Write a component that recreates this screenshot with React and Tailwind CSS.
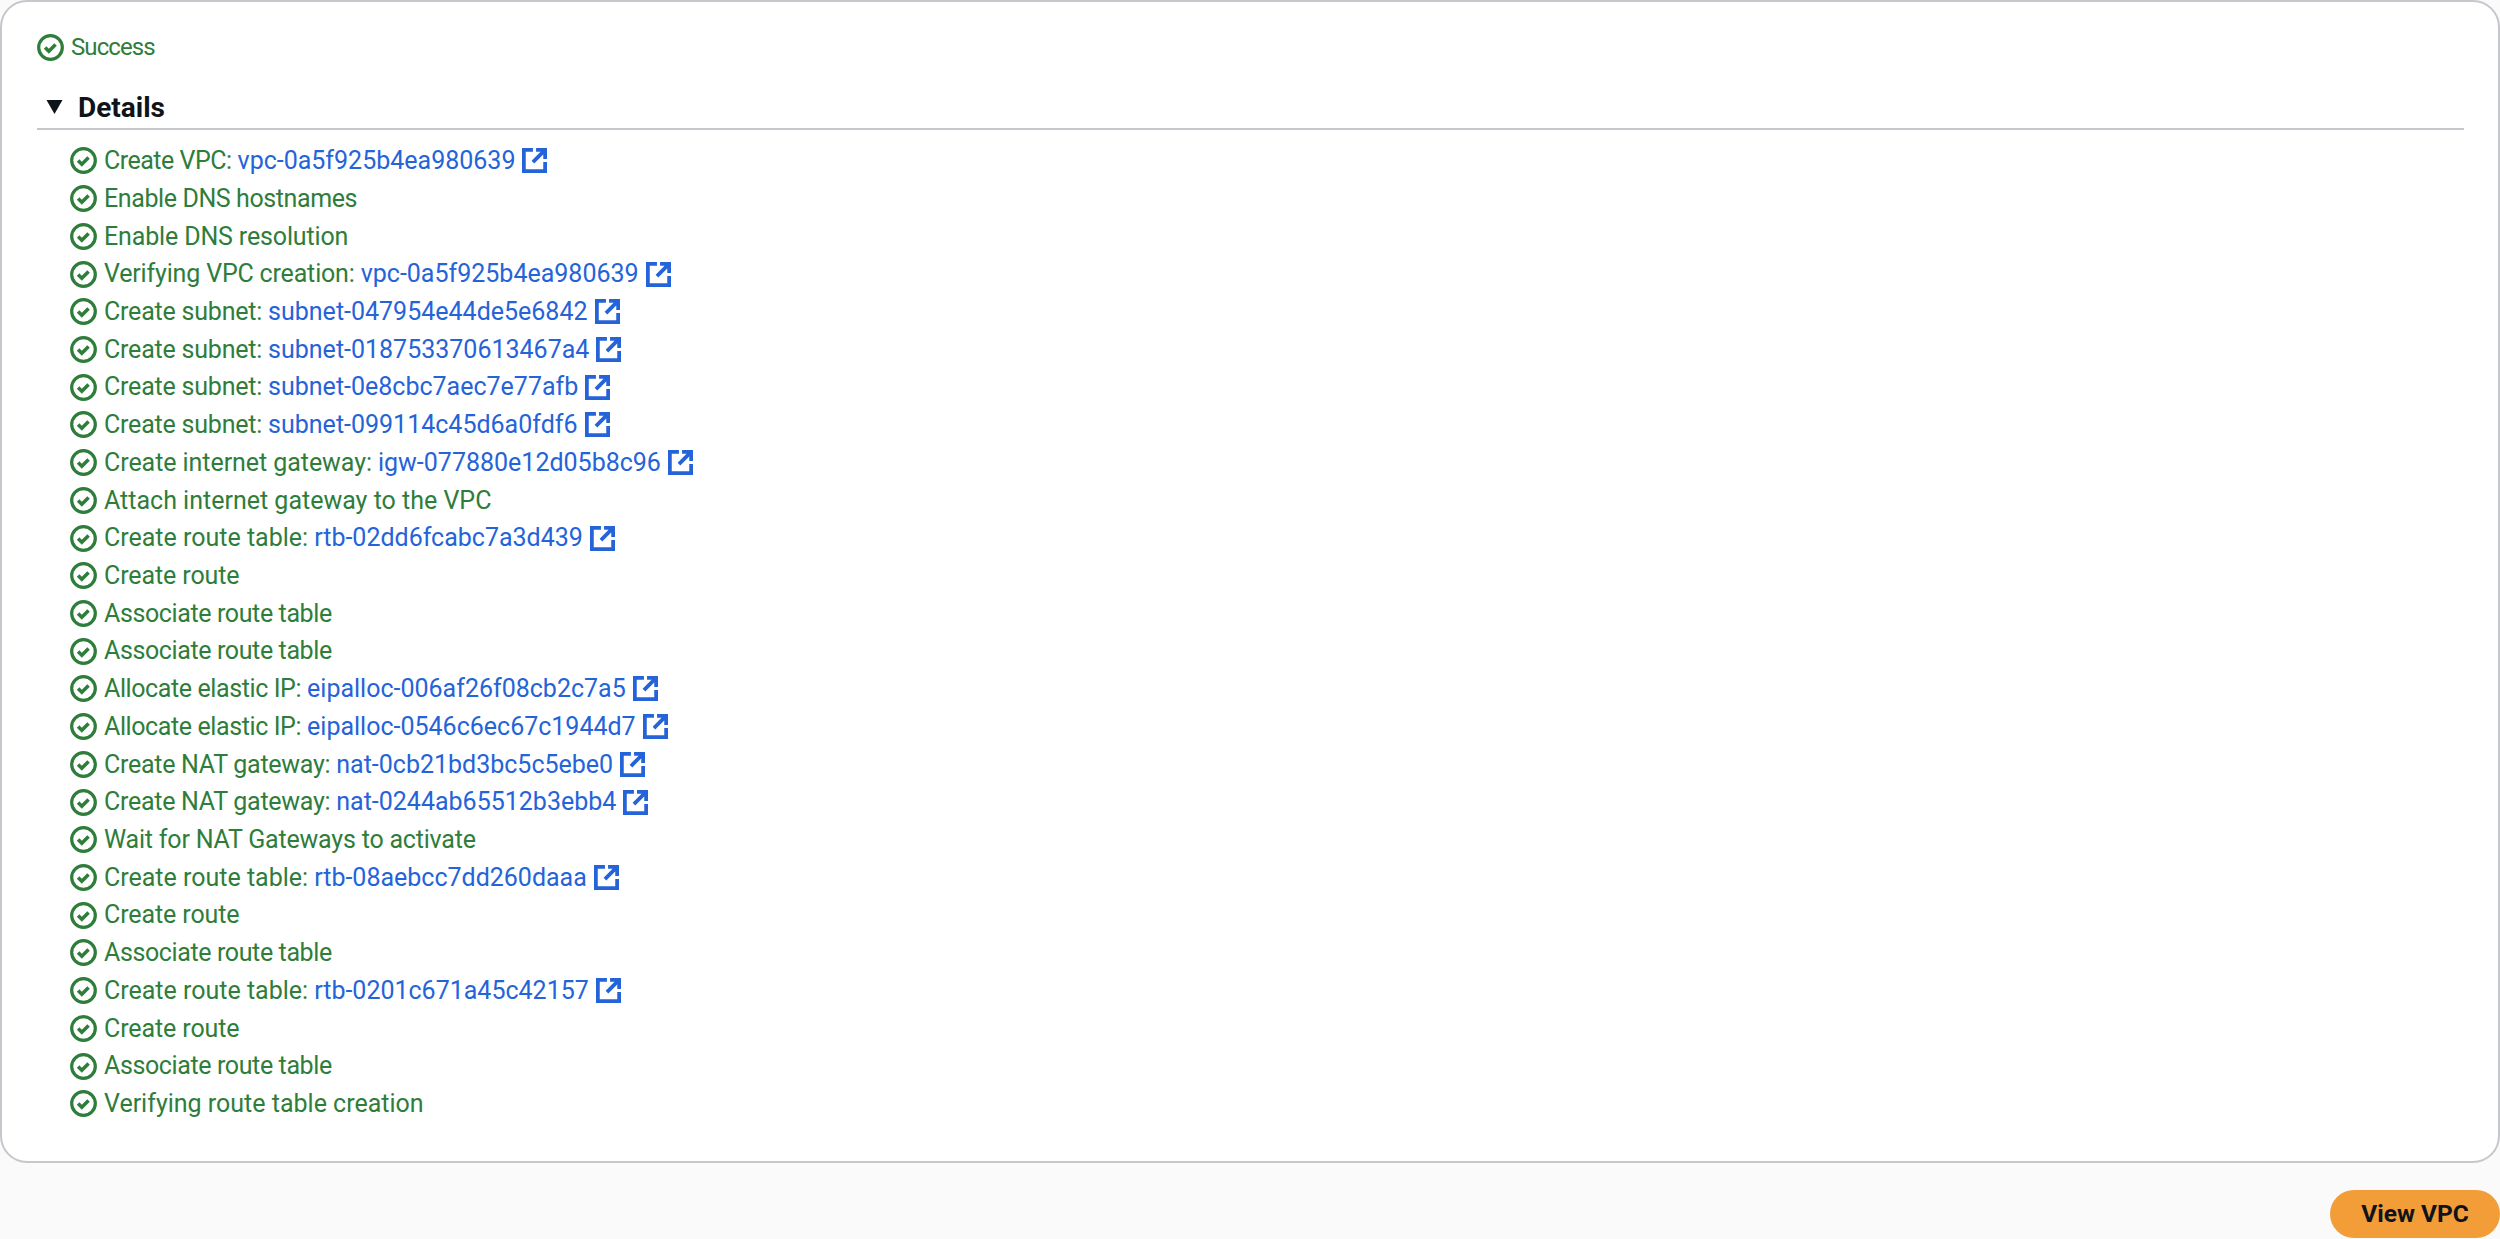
const rows = [
  { label: "Create VPC:", link: "vpc-0a5f925b4ea980639" },
  { label: "Enable DNS hostnames" },
  { label: "Enable DNS resolution" },
  { label: "Verifying VPC creation:", link: "vpc-0a5f925b4ea980639" },
  { label: "Create subnet:", link: "subnet-047954e44de5e6842" },
  { label: "Create subnet:", link: "subnet-018753370613467a4" },
  { label: "Create subnet:", link: "subnet-0e8cbc7aec7e77afb" },
  { label: "Create subnet:", link: "subnet-099114c45d6a0fdf6" },
  { label: "Create internet gateway:", link: "igw-077880e12d05b8c96" },
  { label: "Attach internet gateway to the VPC" },
  { label: "Create route table:", link: "rtb-02dd6fcabc7a3d439" },
  { label: "Create route" },
  { label: "Associate route table" },
  { label: "Associate route table" },
  { label: "Allocate elastic IP:", link: "eipalloc-006af26f08cb2c7a5" },
  { label: "Allocate elastic IP:", link: "eipalloc-0546c6ec67c1944d7" },
  { label: "Create NAT gateway:", link: "nat-0cb21bd3bc5c5ebe0" },
  { label: "Create NAT gateway:", link: "nat-0244ab65512b3ebb4" },
  { label: "Wait for NAT Gateways to activate" },
  { label: "Create route table:", link: "rtb-08aebcc7dd260daaa" },
  { label: "Create route" },
  { label: "Associate route table" },
  { label: "Create route table:", link: "rtb-0201c671a45c42157" },
  { label: "Create route" },
  { label: "Associate route table" },
  { label: "Verifying route table creation" },
];

// Roboto runs a little wide on some of these labels
const labelTracking = {
  "Create VPC:": "tracking-[-0.5px]",
  "Enable DNS hostnames": "tracking-[-0.4px]",
  "Enable DNS resolution": "tracking-[-0.15px]",
  "Verifying VPC creation:": "tracking-[-0.17px]",
  "Create subnet:": "tracking-[-0.21px]",
  "Create internet gateway:": "tracking-[-0.06px]",
  "Associate route table": "tracking-[-0.38px]",
  "Allocate elastic IP:": "tracking-[-0.4px]",
  "Create NAT gateway:": "tracking-[-0.28px]",
  "Wait for NAT Gateways to activate": "tracking-[-0.2px]",
  "Create route": "tracking-[-0.1px]",
};

function CheckIcon() {
  return (
    <svg viewBox="0 0 16 16" fill="none" stroke="#2e7d3a" strokeWidth="1.9" className="w-[27px] h-[27px] shrink-0">
      <circle cx="8" cy="8" r="7" />
      <path d="M4.8 8l2.2 2.2 4-4" strokeWidth="2.1" />
    </svg>
  );
}

function ExternalIcon() {
  return (
    <svg viewBox="0 0 16 16" fill="none" stroke="#2563d9" strokeWidth="2.4" className="w-[25px] h-[25px] shrink-0 ml-[7px]">
      <path d="M14.8 9v5.8H1.2V1.2H7" />
      <path d="M7 9l7-7M9 1.2h5.8V7" />
    </svg>
  );
}

export default function App() {
  return (
    <div className="w-[2500px] h-[1239px] overflow-hidden bg-[#fafafa] text-[25px] font-['Roboto',sans-serif]">
      <div className="h-[1163px] bg-white border-2 border-[#c6c6cd] rounded-[27px] pt-[28px] pl-[35px] pr-[34px]">
        <div className="flex items-center gap-[7px] h-[34px] text-[#2e7d3a]">
          <CheckIcon />
          <span className="text-[24px] tracking-[-0.9px]">Success</span>
        </div>
        <div className="mt-[25px] h-[41px] border-b-2 border-[#c6c6cd] flex items-start pl-[9px] gap-[15px] font-bold text-[28px] text-[#0f141a]">
          <svg viewBox="0 0 16 14" className="w-[17px] h-[14px] mt-[11px] shrink-0" fill="#0f141a">
            <path d="M0 0h16L8 14z" />
          </svg>
          <span className="leading-[38px]">Details</span>
        </div>
        <ul className="mt-[12px] pl-[33px]">
          {rows.map((row, i) => (
            <li key={i} className="flex items-center gap-[7px] h-[37.72px] text-[#2e7d3a]">
              <CheckIcon />
              <span className="flex items-center gap-[6px]">
                <span className={labelTracking[row.label]}>{row.label}</span>
                {row.link && (
                  <span className="flex items-center text-[#2563d9]">
                    <span>{row.link}</span>
                    <ExternalIcon />
                  </span>
                )}
              </span>
            </li>
          ))}
        </ul>
      </div>
      <div className="flex justify-end pt-[27px]">
        <button className="w-[170px] h-[48px] rounded-full bg-[#f29d38] text-[#0f141a] font-bold text-[24.5px]">
          View VPC
        </button>
      </div>
    </div>
  );
}
